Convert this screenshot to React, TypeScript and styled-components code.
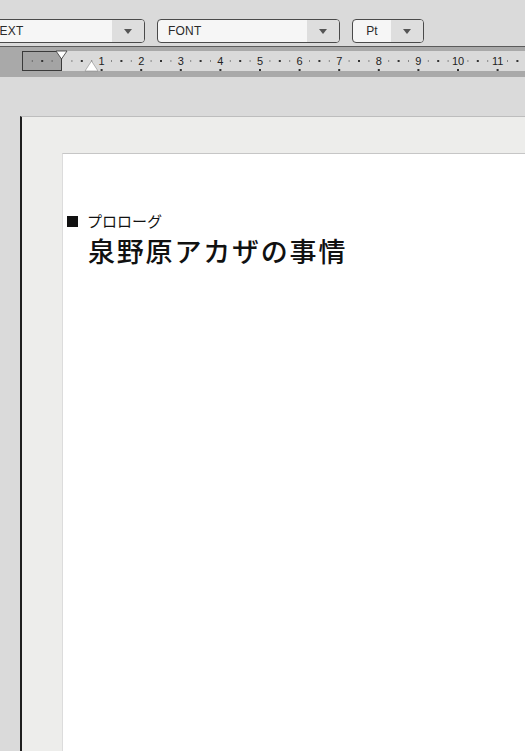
import React from "react";
import styled, { createGlobalStyle } from "styled-components";

const Global = createGlobalStyle`
  html, body { margin: 0; padding: 0; background: #dadada; overflow: hidden; }
  #root { width: 525px; height: 751px; overflow: hidden; }
`;

const Screen = styled.div`
  width: 525px;
  height: 751px;
  display: flex;
  flex-direction: column;
  background: #dadada;
  overflow: hidden;
  font-family: "Liberation Sans", Arial, sans-serif;
`;

const Toolbar = styled.div`
  height: 47px;
  box-sizing: border-box;
  padding-top: 19px;
  display: flex;
  gap: 12px;
  margin-left: -19px;
  border-bottom: 1px solid #5a5a5a;
  flex-shrink: 0;
`;

const Combo = styled.div<{ $w: number }>`
  width: ${(p) => p.$w}px;
  height: 24px;
  box-sizing: border-box;
  border: 1px solid #4a4a4a;
  border-radius: 4px;
  display: flex;
  overflow: hidden;
  background: #f6f6f6;
`;

const ComboText = styled.div<{ $center?: boolean }>`
  flex: 1;
  display: flex;
  align-items: center;
  justify-content: ${(p) => (p.$center ? "center" : "flex-start")};
  padding-left: ${(p) => (p.$center ? "0" : "10px")};
  font-size: 12px;
  color: #2a2a2a;
  letter-spacing: 0.2px;
`;

const ComboArrow = styled.div`
  width: 32px;
  display: flex;
  align-items: center;
  justify-content: center;
  background: #dedede;
`;

const Arrow = () => (
  <svg width="8" height="5" viewBox="0 0 8 5">
    <polygon points="0,0 8,0 4,5" fill="#555" />
  </svg>
);

const RulerBand = styled.div`
  height: 30px;
  background: #a9a9a9;
  flex-shrink: 0;
`;

const Workspace = styled.div`
  flex: 1;
  padding-top: 39px;
  display: flex;
  min-height: 0;
`;

const Page = styled.div`
  margin-left: 20px;
  flex: 1;
  border-left: 2px solid #1e1e1e;
  border-top: 1px solid #bdbdbd;
  background: #ededeb;
  padding-left: 40px;
  padding-top: 36px;
  display: flex;
`;

const Sheet = styled.div`
  flex: 1;
  background: #ffffff;
  border-top: 1px solid #c6c6c6;
  border-left: 1px solid #dcdcdc;
  padding-top: 57px;
  padding-left: 4px;
  font-family: "Noto Sans CJK JP", sans-serif;
  color: #111;
`;

const Heading = styled.div`
  font-size: 15px;
  line-height: 20px;
  display: flex;
  align-items: center;
  gap: 4px;
`;

const Square = styled.span`
  width: 11px;
  height: 11px;
  background: #111;
  display: inline-block;
  margin-right: 5px;
`;

const Title = styled.div`
  margin-top: 2px;
  margin-left: 21px;
  font-size: 27px;
  line-height: 36px;
  letter-spacing: 1.8px;
  font-weight: 500;
`;

const Ruler = () => {
  const unit = 39.6;
  const origin = 62;
  const marks: React.ReactNode[] = [];
  for (let i = -1; i < 12; i++) {
    const base = origin + i * unit;
    [0.25, 0.5, 0.75].forEach((f, k) => {
      const x = base + f * unit;
      const big = k === 1;
      marks.push(
        <rect
          key={`d${i}-${k}`}
          x={x - (big ? 1 : 0.5)}
          y={big ? 13 : 13.5}
          width={big ? 2 : 1}
          height={big ? 2 : 1}
          fill="#333"
        />
      );
    });
    const n = i + 1;
    if (n >= 1 && n <= 11) {
      const x = origin + n * unit;
      marks.push(
        <text
          key={`n${n}`}
          x={x}
          y={18}
          fontSize="11"
          textAnchor="middle"
          fill="#222"
          fontFamily="'Liberation Sans', Arial, sans-serif"
        >
          {n}
        </text>
      );
      marks.push(<rect key={`t${n}`} x={x - 1} y={22} width={2} height={2} fill="#333" />);
    }
  }
  return (
    <svg width="525" height="30" viewBox="0 0 525 30" style={{ display: "block" }}>
      <rect x="62" y="4" width="463" height="20" fill="#dadada" />
      <rect x="22.5" y="4.5" width="39" height="19" fill="#a4a4a4" stroke="#3a3a3a" strokeWidth="1" />
      {marks}
      <polygon points="56,4 67,4 61.5,12" fill="#fff" stroke="#333" strokeWidth="0.8" />
      <polygon points="85,24 98,24 91.5,14" fill="#fff" stroke="#888" strokeWidth="0.6" />
    </svg>
  );
};

export default function App() {
  return (
    <Screen>
      <Global />
      <Toolbar>
        <Combo $w={164}>
          <ComboText>TEXT</ComboText>
          <ComboArrow>
            <Arrow />
          </ComboArrow>
        </Combo>
        <Combo $w={183}>
          <ComboText>FONT</ComboText>
          <ComboArrow>
            <Arrow />
          </ComboArrow>
        </Combo>
        <Combo $w={72}>
          <ComboText $center>Pt</ComboText>
          <ComboArrow>
            <Arrow />
          </ComboArrow>
        </Combo>
      </Toolbar>
      <RulerBand>
        <Ruler />
      </RulerBand>
      <Workspace>
        <Page>
          <Sheet>
            <Heading>
              <Square />
              <span>プロローグ</span>
            </Heading>
            <Title>泉野原アカザの事情</Title>
          </Sheet>
        </Page>
      </Workspace>
    </Screen>
  );
}
